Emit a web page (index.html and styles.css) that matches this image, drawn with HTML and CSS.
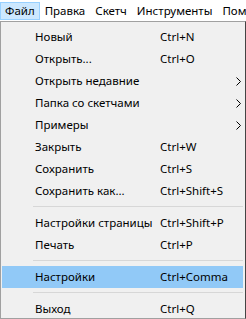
FILE: index.html
```html
<!DOCTYPE html>
<html lang="ru">
<head>
    <meta charset="UTF-8">
    <title>Файл</title>
    <link rel="stylesheet" href="styles.css">
</head>
<body>
    <nav class="menubar">
        <span class="menubar-item active">Файл</span>
        <span class="menubar-item">Правка</span>
        <span class="menubar-item">Скетч</span>
        <span class="menubar-item">Инструменты</span>
        <span class="menubar-item">Помощь</span>
    </nav>

    <ul class="dropdown">
        <li class="item"><span class="label">Новый</span><span class="key">Ctrl+N</span></li>
        <li class="item"><span class="label">Открыть...</span><span class="key">Ctrl+O</span></li>
        <li class="item"><span class="label">Открыть недавние</span><span class="key"></span><svg class="arrow" width="5" height="9" viewBox="0 0 5 9"><polyline points="0.5,0.5 4.5,4.5 0.5,8.5" fill="none" stroke="#000"/></svg></li>
        <li class="item"><span class="label">Папка со скетчами</span><span class="key"></span><svg class="arrow" width="5" height="9" viewBox="0 0 5 9"><polyline points="0.5,0.5 4.5,4.5 0.5,8.5" fill="none" stroke="#000"/></svg></li>
        <li class="item"><span class="label">Примеры</span><span class="key"></span><svg class="arrow" width="5" height="9" viewBox="0 0 5 9"><polyline points="0.5,0.5 4.5,4.5 0.5,8.5" fill="none" stroke="#000"/></svg></li>
        <li class="item"><span class="label">Закрыть</span><span class="key">Ctrl+W</span></li>
        <li class="item"><span class="label">Сохранить</span><span class="key">Ctrl+S</span></li>
        <li class="item"><span class="label">Сохранить как...</span><span class="key">Ctrl+Shift+S</span></li>
        <li class="separator"></li>
        <li class="item"><span class="label">Настройки страницы</span><span class="key">Ctrl+Shift+P</span></li>
        <li class="item"><span class="label">Печать</span><span class="key">Ctrl+P</span></li>
        <li class="separator"></li>
        <li class="item selected"><span class="label">Настройки</span><span class="key">Ctrl+Comma</span></li>
        <li class="separator"></li>
        <li class="item"><span class="label">Выход</span><span class="key">Ctrl+Q</span></li>
    </ul>
</body>
</html>
```

FILE: styles.css
```css
* {
    margin: 0;
    padding: 0;
    box-sizing: border-box;
}

body {
    font-family: 'Noto Sans', sans-serif;
    font-size: 11.5px;
    color: #000;
    background-color: #fff;
    width: 246px;
    height: 319px;
    overflow: hidden;
}

.menubar {
    display: flex;
    height: 21px;
    padding-top: 2px;
    white-space: nowrap;
    overflow: hidden;
}

.menubar-item {
    padding: 0 4px 0 4px;
    line-height: 16px;
    height: 18px;
    border: 1px solid transparent;
}

.menubar-item.active {
    background-color: #cce8ff;
    border-color: #99d1ff;
}

.dropdown {
    list-style: none;
    width: 246px;
    height: 298px;
    background-color: #f0f0f0;
    border: 1px solid #a0a0a0;
    border-right: 1px solid #444;
    padding: 4px 2px 0 1px;
}

.item {
    display: grid;
    grid-template-columns: 158px 1fr 8px;
    align-items: center;
    height: 22px;
    line-height: 22px;
    white-space: nowrap;
}

.item .label {
    padding-left: 33px;
}

.item .arrow {
    margin-left: 1px;
}

.item.selected {
    background-color: #91c9f7;
}

.separator {
    height: 10px;
    margin-left: 31px;
    border-top: 4px solid transparent;
    border-bottom: 5px solid transparent;
    background-color: #d7d7d7;
    background-clip: content-box;
}
```
